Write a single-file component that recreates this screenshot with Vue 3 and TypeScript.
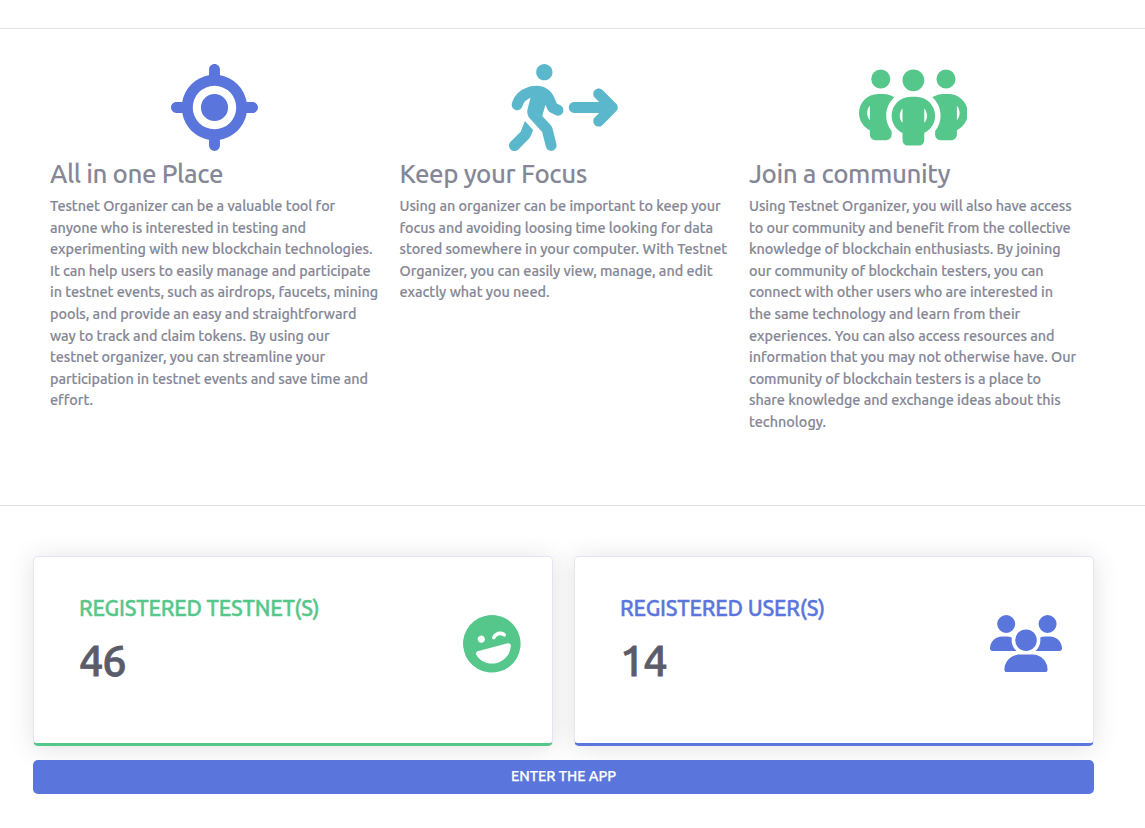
<script setup lang="ts">
interface Line {
  text: string
  width: number
}
interface Feature {
  title: Line
  tone: string
  viewBox: string
  icon: string
  lines: Line[]
}
interface Stat {
  label: Line
  value: Line
  tone: string
  viewBox: string
  icon: string
  tilted: boolean
}

const line = (text: string, width: number): Line => ({ text, width })

// Tracks a line of text so that it spans its measure.
const vFit = {
  mounted(el: HTMLElement, binding: { value: number }) {
    const natural = el.getBoundingClientRect().width
    const count = (el.textContent ?? '').length
    el.style.letterSpacing = `${(binding.value - natural) / count}px`
  },
}

const features: Feature[] = [
  {
    title: line('All in one Place', 173),
    tone: 'primary',
    viewBox: '0 0 512 512',
    icon: 'M256 0c17.7 0 32 14.3 32 32V66.7C368.4 80.1 431.9 143.6 445.3 224H480c17.7 0 32 14.3 32 32s-14.3 32-32 32H445.3C431.9 368.4 368.4 431.9 288 445.3V480c0 17.7-14.3 32-32 32s-32-14.3-32-32V445.3C143.6 431.9 80.1 368.4 66.7 288H32c-17.7 0-32-14.3-32-32s14.3-32 32-32H66.7C80.1 143.6 143.6 80.1 224 66.7V32c0-17.7 14.3-32 32-32zM128 256a128 128 0 1 0 256 0 128 128 0 1 0 -256 0zm128-80a80 80 0 1 1 0 160 80 80 0 1 1 0-160z',
    lines: [
      line('Testnet Organizer can be a valuable tool for', 285.2),
      line('anyone who is interested in testing and', 256),
      line('experimenting with new blockchain technologies.', 322.5),
      line('It can help users to easily manage and participate', 320.5),
      line('in testnet events, such as airdrops, faucets, mining', 328),
      line('pools, and provide an easy and straightforward', 306.5),
      line('way to track and claim tokens. By using our', 279.5),
      line('testnet organizer, you can streamline your', 275.2),
      line('participation in testnet events and save time and', 318),
      line('effort.', 43),
    ],
  },
  {
    title: line('Keep your Focus', 187.5),
    tone: 'info',
    viewBox: '0 0 640 512',
    icon: 'M208 96c26.5 0 48-21.5 48-48S234.5 0 208 0s-48 21.5-48 48s21.5 48 48 48zM123.7 200.5c1-.4 1.9-.8 2.9-1.2l-16.9 63.5c-5.6 21.1-.1 43.6 14.7 59.7l70.7 77.1 22 88.1c4.3 17.1 21.7 27.6 38.8 23.3s27.6-21.7 23.3-38.8l-23-92.1c-1.9-7.8-5.8-14.9-11.2-20.8l-49.5-54 19.3-65.5 9.6 23c4.4 10.6 12.5 19.3 22.8 24.5l26.7 13.3c15.8 7.9 35 1.5 42.9-14.3s1.5-35-14.3-42.9L281 232.7l-15.3-36.8C248.5 154.8 208.3 128 163.7 128c-22.8 0-45.3 4.8-66.1 14l-8 3.5c-32.9 14.6-58.1 42.4-69.4 76.5l-2.6 7.8c-5.6 16.8 3.5 34.9 20.2 40.5s34.9-3.5 40.5-20.2l2.6-7.8c5.7-17.1 18.3-30.9 34.7-38.2l8-3.5zm-30 135.1L68.7 398 9.4 457.4c-12.5 12.5-12.5 32.8 0 45.3s32.8 12.5 45.3 0l62.3-62.3c4.6-4.6 8.2-10.1 10.6-16.1l14.5-36.2-40.7-44.4c-2.5-2.7-4.8-5.6-7-8.6zM550.6 153.4c-12.5-12.5-32.8-12.5-45.3 0s-12.5 32.8 0 45.3L530.7 224 384 224c-17.7 0-32 14.3-32 32s14.3 32 32 32l146.7 0-25.4 25.4c-12.5 12.5-12.5 32.8 0 45.3s32.8 12.5 45.3 0l80-80c12.5-12.5 12.5-32.8 0-45.3l-80-80z',
    lines: [
      line('Using an organizer can be important to keep your', 321.2),
      line('focus and avoiding loosing time looking for data', 313.5),
      line('stored somewhere in your computer. With Testnet', 327.5),
      line('Organizer, you can easily view, manage, and edit', 313),
      line('exactly what you need.', 150),
    ],
  },
  {
    title: line('Join a community', 201),
    tone: 'success',
    viewBox: '0 0 640 512',
    icon: 'M72 88a56 56 0 1 1 112 0A56 56 0 1 1 72 88zM64 245.7C54 256.9 48 271.8 48 288s6 31.1 16 42.3V245.7zm144.4-49.3C178.7 222.7 160 261.2 160 304c0 34.3 12 65.8 32 90.5V416c0 17.7-14.3 32-32 32H96c-17.7 0-32-14.3-32-32V389.2C26.2 371.2 0 332.7 0 288c0-61.9 50.1-112 112-112h32c24 0 46.2 7.5 64.4 20.3zM448 416V394.5c20-24.7 32-56.2 32-90.5c0-42.8-18.7-81.3-48.4-107.7C449.8 183.5 472 176 496 176h32c61.9 0 112 50.1 112 112c0 44.7-26.2 83.2-64 101.2V416c0 17.7-14.3 32-32 32H480c-17.7 0-32-14.3-32-32zm8-328a56 56 0 1 1 112 0A56 56 0 1 1 456 88zM576 245.7v84.7c10-11.3 16-26.1 16-42.3s-6-31.1-16-42.3zM320 32a64 64 0 1 1 0 128 64 64 0 1 1 0-128zM240 304c0 16.2 6 31 16 42.3V261.7c-10 11.3-16 26.1-16 42.3zm144-42.3v84.7c10-11.3 16-26.1 16-42.3s-6-31.1-16-42.3zM448 304c0 44.7-26.2 83.2-64 101.2V448c0 17.7-14.3 32-32 32H288c-17.7 0-32-14.3-32-32V405.2c-37.8-18-64-56.5-64-101.2c0-61.9 50.1-112 112-112h32c61.9 0 112 50.1 112 112z',
    lines: [
      line('Using Testnet Organizer, you will also have access', 322.7),
      line('to our community and benefit from the collective', 321.2),
      line('knowledge of blockchain enthusiasts. By joining', 311.5),
      line('our community of blockchain testers, you can', 294.5),
      line('connect with other users who are interested in', 304),
      line('the same technology and learn from their', 271.2),
      line('experiences. You can also access resources and', 305.5),
      line('information that you may not otherwise have. Our', 327),
      line('community of blockchain testers is a place to', 292),
      line('share knowledge and exchange ideas about this', 311.7),
      line('technology.', 77),
    ],
  },
]

const stats: Stat[] = [
  {
    label: line('REGISTERED TESTNET(S)', 240.5),
    value: line('46', 46.5),
    tone: 'success',
    viewBox: '0 0 512 512',
    icon: 'M256 512A256 256 0 1 0 256 0a256 256 0 1 0 0 512zM96.8 314.1c-3.8-13.7 7.4-26.1 21.6-26.1H393.6c14.2 0 25.5 12.4 21.6 26.1C396.2 382 332.1 432 256 432s-140.2-50-159.2-117.9zM144.4 192a32 32 0 1 1 64 0 32 32 0 1 1 -64 0zm156.4 25.6c-5.3 7.1-15.3 8.5-22.4 3.2s-8.5-15.3-3.2-22.4c30.4-40.5 91.2-40.5 121.6 0c5.3 7.1 3.9 17.1-3.2 22.4s-17.1 3.9-22.4-3.2c-17.6-23.5-52.8-23.5-70.4 0z',
    tilted: true,
  },
  {
    label: line('REGISTERED USER(S)', 205),
    value: line('14', 46.5),
    tone: 'primary',
    viewBox: '0 0 640 512',
    icon: 'M144 0a80 80 0 1 1 0 160A80 80 0 1 1 144 0zM512 0a80 80 0 1 1 0 160A80 80 0 1 1 512 0zM0 298.7C0 239.8 47.8 192 106.7 192h42.7c15.9 0 31 3.5 44.6 9.7c-1.3 7.2-1.9 14.7-1.9 22.3c0 38.2 16.8 72.5 43.3 96c-.2 0-.4 0-.7 0H21.3C9.6 320 0 310.4 0 298.7zM405.3 320c-.2 0-.4 0-.7 0c26.6-23.5 43.3-57.8 43.3-96c0-7.6-.7-15-1.9-22.3c13.6-6.3 28.7-9.7 44.6-9.7h42.7C592.2 192 640 239.8 640 298.7c0 11.8-9.6 21.3-21.3 21.3H405.3zM224 224a96 96 0 1 1 192 0 96 96 0 1 1 -192 0zM128 485.3C128 411.7 187.7 352 261.3 352H378.7C452.3 352 512 411.7 512 485.3c0 14.7-11.9 26.7-26.7 26.7H154.7c-14.7 0-26.7-11.9-26.7-26.7z',
    tilted: false,
  },
]
</script>

<template>
  <main class="page">
    <section class="features">
      <article v-for="f in features" :key="f.title.text" class="feature">
        <svg class="feature-icon" :class="f.tone" :viewBox="f.viewBox" aria-hidden="true">
          <path fill-rule="evenodd" :d="f.icon" />
        </svg>
        <h2 class="feature-title"><span v-fit="f.title.width" class="fit">{{ f.title.text }}</span></h2>
        <p class="feature-text">
          <span v-for="l in f.lines" :key="l.text" class="row"><span v-fit="l.width" class="fit">{{ l.text }}</span></span>
        </p>
      </article>
    </section>

    <section class="summary">
      <div class="cards">
        <article v-for="s in stats" :key="s.label.text" class="card" :class="s.tone">
          <div class="card-body">
            <div class="card-label"><span v-fit="s.label.width" class="fit">{{ s.label.text }}</span></div>
            <div class="card-value"><span v-fit="s.value.width" class="fit">{{ s.value.text }}</span></div>
          </div>
          <svg class="card-icon" :class="{ tilted: s.tilted }" :viewBox="s.viewBox" aria-hidden="true">
            <path fill-rule="evenodd" :d="s.icon" />
          </svg>
        </article>
      </div>
      <button class="enter" type="button"><span v-fit="105" class="fit">ENTER THE APP</span></button>
    </section>
  </main>
</template>

<style>
body {
  margin: 0;
  background: #fff;
}
</style>

<style scoped>
.page {
  box-sizing: border-box;
  height: 828px;
  padding-top: 28px;
  overflow: hidden;
  font-family: Ubuntu, "Noto Sans", "Open Sans", sans-serif;
  color: #858796;
}
.primary { color: #5a75dc; }
.info { color: #5bb8cc; }
.success { color: #56c78b; }
.fit {
  display: inline-block;
  white-space: nowrap;
}
.features {
  box-sizing: border-box;
  height: 478px;
  padding: 35px 0 0 50px;
  border-top: 1px solid #e3e3e3;
  border-bottom: 1px solid #e3e3e3;
  display: grid;
  grid-template-columns: repeat(3, 328px);
  column-gap: 21.5px;
}
.feature {
  display: flex;
  flex-direction: column;
}
.feature-icon {
  height: 87px;
  align-self: center;
  fill: currentColor;
}
.feature-title {
  margin: 6.9px 0 7.1px;
  font-size: 25.9px;
  line-height: 31px;
  font-weight: 500;
}
.feature-text {
  margin: 0;
  font-size: 14.4px;
  line-height: 21.6px;
  font-weight: 500;
  -webkit-text-stroke: 0.15px currentColor;
}
.row {
  display: block;
  height: 21.6px;
}
.summary {
  width: 1061px;
  margin: 50px 0 0 33px;
}
.cards {
  display: grid;
  grid-template-columns: 1fr 1fr;
  gap: 21px;
}
.card {
  box-sizing: border-box;
  height: 190px;
  padding: 0 31px 0 45px;
  display: flex;
  justify-content: space-between;
  align-items: center;
  background: #fff;
  border: 1px solid #e3e6f0;
  border-bottom: 3px solid currentColor;
  border-radius: 5px;
  box-shadow: 0 2px 25px rgba(58, 59, 69, 0.15);
}
.card-body {
  align-self: flex-start;
  padding-top: 36px;
}
.card-label {
  font-size: 21.6px;
  line-height: 30px;
  font-weight: 500;
  -webkit-text-stroke: 0.4px currentColor;
}
.card-value {
  margin-top: 11px;
  font-size: 43.2px;
  line-height: 52px;
  font-weight: 500;
  -webkit-text-stroke: 0.8px currentColor;
  color: #5a5c69;
}
.card-icon {
  height: 57.6px;
  margin-top: -13.4px;
  fill: currentColor;
}
.tilted {
  transform: rotate(-15deg);
}
.enter {
  position: relative;
  display: block;
  width: 100%;
  height: 34px;
  margin-top: 14px;
  padding: 0 0 2px;
  border: 0;
  border-radius: 5px;
  background: #5a75dc;
  color: #fff;
  font-family: inherit;
  font-size: 14.4px;
  font-weight: 500;
  -webkit-text-stroke: 0.25px currentColor;
  line-height: 20px;
}
</style>
